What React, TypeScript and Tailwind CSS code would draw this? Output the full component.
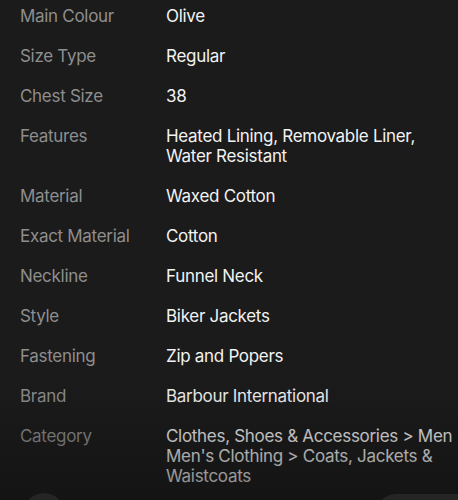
const SPECS = [
  { label: 'Main Colour', value: 'Olive' },
  { label: 'Size Type', value: 'Regular' },
  { label: 'Chest Size', value: '38' },
  { label: 'Features', value: 'Heated Lining, Removable Liner,\nWater Resistant' },
  { label: 'Material', value: 'Waxed Cotton' },
  { label: 'Exact Material', value: 'Cotton' },
  { label: 'Neckline', value: 'Funnel Neck' },
  { label: 'Style', value: 'Biker Jackets' },
  { label: 'Fastening', value: 'Zip and Popers' },
  { label: 'Brand', value: 'Barbour International' },
  {
    label: 'Category',
    value: "Clothes, Shoes & Accessories > Men >\nMen's Clothing > Coats, Jackets &\nWaistcoats",
  },
];

export default function App() {
  return (
    <div
      className="relative h-[500px] w-[458px] overflow-hidden bg-[#1b1b1b] text-[17px] leading-[20px]"
      style={{ fontFamily: 'Inter, "Noto Sans", sans-serif' }}
    >
      {/* Spec list */}
      <div className="flex w-[520px] flex-col gap-5 pl-5 pt-[6px]">
        {SPECS.map((row) => (
          <div key={row.label} className="flex">
            <div className="w-[146px] shrink-0 text-[#8e8e8e] tracking-[-0.3px]">{row.label}</div>
            <div className="whitespace-pre-line text-[#f2f2f2] tracking-[-0.3px]">{row.value}</div>
          </div>
        ))}
      </div>

      {/* Bottom fade */}
      <div className="pointer-events-none absolute inset-x-0 bottom-0 h-[120px] bg-gradient-to-b from-transparent to-[#0d0d0d]/50" />

      {/* Floating controls, cut off by the viewport */}
      <div className="absolute left-[24px] top-[493px] h-10 w-10 rounded-full bg-[#252525]" />
      <div className="absolute left-[376px] top-[494px] h-10 w-[120px] rounded-full bg-[#252525]" />
    </div>
  );
}
